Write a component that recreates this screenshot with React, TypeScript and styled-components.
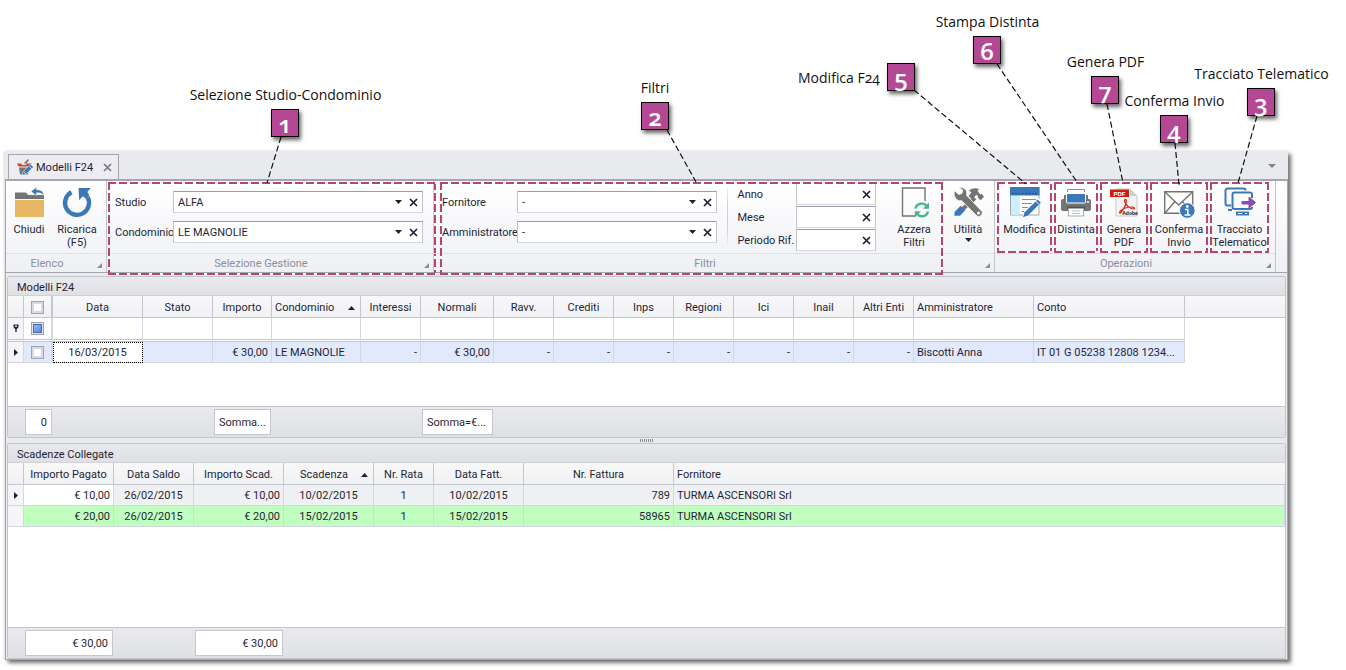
import React from "react";
import styled, { createGlobalStyle, css } from "styled-components";

const ink = "#1f1f35";
const line = "#c4c6ce";
const steel = "#a3a5af";
const rose = "#b5476b";
const blue = "#3c78b8";
const grey = "#747474";
const uiFont = `Roboto, "Liberation Sans", sans-serif`;
const noteFont = `"Open Sans", "Noto Sans", sans-serif`;

const GlobalStyle = createGlobalStyle`
  * { box-sizing: border-box; }
  body { margin: 0; background: #fff; color: ${ink}; font: 11px/13px ${uiFont}; }
  button, input, select { font: inherit; color: inherit; margin: 0; }
`;

/* ---------- page and window ---------- */

const Stage = styled.div`
  position: relative;
  display: flex;
  flex-direction: column;
  min-height: 100vh;
  min-width: 1346px;
  padding: 151px 58px 10px 5px;
`;

const Window = styled.main`
  flex: 1;
  display: flex;
  flex-direction: column;
  background: #e9eaee;
  box-shadow: 3px 3px 4px rgba(0, 0, 0, 0.55), -1px 0 2px rgba(0, 0, 0, 0.12);
`;

const TabStrip = styled.header`
  display: flex;
  align-items: flex-end;
  height: 30px;
  padding: 0 10px 0 3px;
  border-bottom: 2px solid ${steel};
`;

const Tab = styled.div`
  display: flex;
  align-items: center;
  gap: 2px;
  height: 25px;
  padding: 0 6px 0 8px;
  border: 1px solid ${steel};
  border-bottom: 0;
  background: #ededf1;
`;

const TabTitle = styled.h1`
  margin: 0;
  width: 65px;
  font: inherit;
  white-space: nowrap;
`;

const PlainButton = styled.button`
  display: flex;
  align-items: center;
  justify-content: center;
  padding: 0;
  border: 0;
  background: none;
`;

const TabMenu = styled(PlainButton)`
  width: 12px;
  height: 12px;
  margin: 0 0 7px auto;
`;

const Body = styled.div`
  flex: 1;
  display: flex;
  flex-direction: column;
  border: 1px solid ${steel};
  border-top: 0;
`;

/* ---------- ribbon ---------- */

const Ribbon = styled.nav`
  display: flex;
  height: 92px;
  margin-bottom: 3px;
  border-bottom: 1px solid ${steel};
  background: linear-gradient(#ffffff, #f3f4f7 75%, #eff0f4);
`;

const dashes = (inset: string) => css`
  content: "";
  position: absolute;
  inset: ${inset};
  pointer-events: none;
  background:
    repeating-linear-gradient(90deg, ${rose} 0 8px, #fff 8px 11px) 0 0 / 100% 2px no-repeat,
    repeating-linear-gradient(90deg, ${rose} 0 8px, #fff 8px 11px) 0 100% / 100% 2px no-repeat,
    repeating-linear-gradient(180deg, ${rose} 0 8px, #fff 8px 11px) 0 0 / 2px 100% no-repeat,
    repeating-linear-gradient(180deg, ${rose} 0 8px, #fff 8px 11px) 100% 0 / 2px 100% no-repeat;
`;

const Group = styled.section<{ $width: number; $mark?: string }>`
  position: relative;
  display: flex;
  flex-direction: column;
  width: ${(p) => p.$width}px;
  border-right: 1px solid ${line};
  ${(p) => p.$mark && css`&::after { ${dashes(p.$mark)} }`}
`;

const GroupBody = styled.div<{ $pad?: number; $gap?: number }>`
  display: flex;
  align-items: flex-start;
  gap: ${(p) => p.$gap ?? 0}px;
  height: 72px;
  padding-left: ${(p) => p.$pad ?? 0}px;
`;

const GroupFoot = styled.footer`
  display: flex;
  align-items: center;
  height: 19px;
  border-top: 1px solid #dfe0e5;
  color: #8b8d9a;
`;

const GroupName = styled.h2`
  flex: 1;
  margin: 0;
  font: inherit;
  text-align: center;
`;

const Launcher = styled(PlainButton)`
  width: 18px;
  height: 100%;
  padding: 5px 0 0 4px;
`;

const Tool = styled.button<{ $width: number; $marked?: boolean }>`
  position: relative;
  display: flex;
  flex-direction: column;
  align-items: center;
  flex: none;
  width: ${(p) => p.$width}px;
  height: 71px;
  margin-top: 1px;
  padding: 5px 0 0;
  border: 0;
  background: none;
  ${(p) => p.$marked && css`&::after { ${dashes("0")} }`}
`;

const ToolText = styled.span`
  margin: 4px 0 2px;
  text-align: center;
  white-space: pre;
`;

const Separator = styled.div`
  width: 1px;
  height: 62px;
  margin-top: 5px;
  background: linear-gradient(#f2f3f6, #cfd1d8 30%, #cfd1d8 70%, #f2f3f6);
`;

const Fields = styled.div<{ $cols: string; $gap: number; $top: number }>`
  display: grid;
  grid-template-columns: ${(p) => p.$cols};
  grid-auto-rows: 22px;
  align-items: center;
  row-gap: ${(p) => p.$gap}px;
  padding-top: ${(p) => p.$top}px;
`;

const FieldLabel = styled.label`
  white-space: nowrap;
`;

const FieldBox = styled.div`
  display: flex;
  align-items: center;
  height: 22px;
  border: 1px solid #c3c5cd;
  border-top-color: #9b9da8;
  border-bottom-color: #d5d7de;
  background: #fff;
`;

const Combo = styled.div`
  position: relative;
  flex: 1;
  min-width: 0;
  display: flex;
  align-items: center;
`;

const Select = styled.select`
  appearance: none;
  width: 100%;
  height: 20px;
  padding: 0 14px 0 4px;
  border: 0;
  background: transparent;
`;

const ComboArrow = styled.svg`
  position: absolute;
  right: 3px;
  pointer-events: none;
`;

const TextBox = styled.input`
  flex: 1;
  min-width: 0;
  height: 20px;
  padding: 0 4px;
  border: 0;
  background: transparent;
`;

const Clear = styled(PlainButton)`
  width: 17px;
  height: 20px;
`;

/* ---------- grids ---------- */

const Panel = styled.section<{ $grow?: boolean }>`
  display: flex;
  flex-direction: column;
  margin: 0 1px;
  border: 1px solid ${line};
  border-radius: 2px;
  background: #fff;
  ${(p) => (p.$grow ? "flex: 1;" : "min-height: 162px;")}
`;

const Caption = styled.h2`
  height: 19px;
  margin: 0;
  padding: 4px 9px 0;
  border-bottom: 1px solid #d0d2d8;
  background: linear-gradient(#e8e9ed, #dfe0e4);
  font: inherit;
`;

const Table = styled.table`
  width: 100%;
  table-layout: fixed;
  border-collapse: separate;
  border-spacing: 0;
`;

type Align = "left" | "center" | "right";

const Head = styled.th<{ $align?: Align; $thick?: boolean }>`
  height: 22px;
  padding: 2px 3px 0;
  border-right: ${(p) => (p.$thick ? 2 : 1)}px solid ${line};
  border-bottom: 1px solid ${line};
  background: linear-gradient(#f8f8f9, #f0f1f3);
  font-weight: normal;
  text-align: ${(p) => p.$align ?? "center"};
  white-space: nowrap;
  &:last-child { border-right: 0; }
`;

const HeadInner = styled.span`
  display: flex;
  align-items: center;
  justify-content: space-between;
  padding-right: 2px;
`;

const HeadLabel = styled.span<{ $align?: Align }>`
  flex: 1;
  text-align: ${(p) => p.$align ?? "center"};
`;

type Tone = "white" | "blue" | "green" | "grey";
const tones: Record<Tone, string> = {
  white: "#fff",
  blue: "#e1e9fd",
  green: "#c0ffc0",
  grey: "#eff0f2",
};

const Cell = styled.td<{ $align?: Align; $tone?: Tone; $thick?: boolean; $focus?: boolean }>`
  height: 21px;
  padding: 0 3px;
  border-right: ${(p) => (p.$thick ? 2 : 1)}px solid #d3d6e0;
  border-bottom: 1px solid #d3d6e0;
  background: ${(p) => tones[p.$tone ?? "white"]};
  text-align: ${(p) => p.$align ?? "left"};
  white-space: nowrap;
  ${(p) => p.$focus && "outline: 1px dotted #000; outline-offset: -1px;"}
`;

const EndCell = styled.td``;

const FilterCell = styled(Cell)`
  height: 24px;
  border-bottom: 3px double ${line};
`;

const Marker = styled(Cell)`
  padding: 0;
  background: #f4f5f7;
  text-align: center;
`;

const FilterMarker = styled(Marker)`
  height: 24px;
  border-bottom: 3px double ${line};
`;

const CheckBox = styled.input`
  appearance: none;
  display: block;
  width: 13px;
  height: 13px;
  margin: 0 auto;
  border: 1px solid #9fa2af;
  background: #fff;
  box-shadow: inset 0 0 0 2px #d8dae1;
`;

const FilterCheckBox = styled(CheckBox)`
  background: linear-gradient(135deg, #a8c2f4, #4c7be0);
  box-shadow: inset 0 0 0 1px #e4e6ec, inset 0 0 0 2px #4669b4;
`;

const Totals = styled.footer<{ $cols: string }>`
  display: grid;
  grid-template-columns: ${(p) => p.$cols};
  align-items: center;
  height: 31px;
  margin-top: auto;
  border-top: 1px solid ${line};
  background: linear-gradient(#e9eaee, #dfe0e4);
`;

const Total = styled.output<{ $col: number; $left?: boolean }>`
  grid-column: ${(p) => p.$col};
  height: 26px;
  margin: 0 1px;
  padding: 6px 4px;
  border: 1px solid ${line};
  background: #fff;
  text-align: ${(p) => (p.$left ? "left" : "right")};
  white-space: nowrap;
`;

const Splitter = styled.div`
  display: flex;
  justify-content: center;
  align-items: center;
  height: 5px;
`;

/* ---------- notes over the window ---------- */

const Leaders = styled.svg`
  position: absolute;
  left: 0;
  top: 0;
  pointer-events: none;
`;

const Note = styled.span<{ $x: number; $y: number; $w: number }>`
  position: absolute;
  left: ${(p) => p.$x}px;
  top: ${(p) => p.$y}px;
  width: ${(p) => p.$w}px;
  display: flex;
  justify-content: center;
  color: #111;
  font: 14px/20px ${noteFont};
  font-variant-numeric: oldstyle-nums;
  white-space: nowrap;
`;

const Badge = styled.span<{ $x: number; $y: number }>`
  position: absolute;
  left: ${(p) => p.$x}px;
  top: ${(p) => p.$y}px;
  width: 28px;
  height: 28px;
  border: 1px solid #000;
  background: #b44894;
  box-shadow: 2px 3px 4px rgba(0, 0, 0, 0.6);
  color: #fff;
  font: 600 24px/27px ${noteFont};
  font-variant-numeric: oldstyle-nums;
  text-align: center;
`;

/* ---------- drawings ---------- */

const Icon = ({ children }: { children: React.ReactNode }) => (
  <svg width="32" height="32" viewBox="0 0 32 32" aria-hidden="true">{children}</svg>
);

const Down = () => (
  <svg width="7" height="4" viewBox="0 0 7 4" aria-hidden="true"><path d="M0 0h7L3.5 4z" fill={ink} /></svg>
);

const Cross = ({ size = 9, color = ink }: { size?: number; color?: string }) => (
  <svg width={size} height={size} viewBox="0 0 9 9" aria-hidden="true">
    <path d="M1 1l7 7M8 1L1 8" stroke={color} strokeWidth="1.7" />
  </svg>
);

const SortUp = () => (
  <svg width="7" height="4" viewBox="0 0 7 4" aria-hidden="true"><path d="M0 4h7L3.5 0z" fill={ink} /></svg>
);

const RowArrow = () => (
  <svg width="4" height="7" viewBox="0 0 4 7" aria-hidden="true"><path d="M0 0v7l4-3.5z" fill={ink} /></svg>
);

const FilterPin = () => (
  <svg width="6" height="8" viewBox="0 0 6 8" aria-hidden="true">
    <path d="M.5 .500h5v2.500L4 5H2L.5 3z" fill={ink} />
    <path d="M2 1.500h2v1.300H2z" fill="#fff" />
    <path d="M2.300 5h1.400v3H2.300z" fill={ink} />
  </svg>
);

const TabIcon = () => (
  <svg width="17" height="17" viewBox="0 0 17 17" aria-hidden="true">
    <path d="M0 4.500h4l1.500 1.500h3L10 4.500h4.500L13 7.500H1.500z" fill="#d0452c" />
    <path d="M6.500 4.500L11 0l1 1-2.500 3.500z" fill="#777" />
    <path d="M2 8.500h10l-1 7H3z" fill="#777" />
    <path d="M5 16.500l1-4L13.500 5l3 3L9 15.500z" fill="#fff" />
    <path d="M5.500 16l1-3.500L13.500 5.500l2.700 2.600L9 15z" fill={blue} />
    <path d="M7 13l1.600 1.500M12.500 7.500l2 2" stroke="#fff" strokeWidth=".8" />
  </svg>
);

const CloseFolder = () => (
  <Icon>
    <path d="M2 5.500h10.500l3 2.500H31v4H2z" fill={grey} />
    <path d="M2 13h29v17H2z" fill="#e9b764" />
    <path d="M18 4.500l5.500-4.300v2.600c4.500 0 6.800 1.700 7.500 5.700-2-2.300-4-2.800-7.500-2.800v3z" fill={blue} stroke="#fff" strokeWidth=".4" />
  </Icon>
);

const Reload = () => (
  <Icon>
    <path d="M10.500 5.200A12 12 0 1 0 26.500 10" fill="none" stroke={blue} strokeWidth="4.400" />
    <path d="M17.500 1h12.200l-3.300 4 2 3.600-3.500 3-3.100-2.400-3.600 4z" fill={blue} />
  </Icon>
);

const ResetFilters = () => (
  <Icon>
    <path d="M27 14V1H4.500v28H17" fill="none" stroke={grey} strokeWidth="1.400" />
    <path d="M17.500 21.500c1.200-5.500 8.500-6.500 11.300-2.200" fill="none" stroke="#4bb58a" strokeWidth="2.400" />
    <path d="M31 15.500v6.300h-6.200z" fill="#4bb58a" />
    <path d="M30 24.500c-1.200 5.300-8 6.300-11 2.200" fill="none" stroke="#4bb58a" strokeWidth="2.400" />
    <path d="M16.800 30.500v-6.300H23z" fill="#4bb58a" />
  </Icon>
);

const Utilities = () => (
  <Icon>
    <path d="M23 11L8.500 24" stroke={grey} strokeWidth="4" />
    <path d="M2.500 25l6.200-6.200 4.500 4.500-5.200 5.500H2.500z" fill={blue} />
    <path d="M17 3.500c3-2.300 6.500-2.800 10-1.500l-1.500 2 2.800 3.500 1.500-.8 2.200 3-3.300 3.600-3-2.900.3-1.300-1.600-1.300L20 12.500 16.500 9l3-3.500z" fill={grey} />
    <path d="M2.500 3.500l4 4 3.500-1 .8-3.400-3.700-2.300c5-1.300 8.800 2.700 7.400 7.400L30 24.500c1 3-2 6-5 4.500L9.500 13.500C5 15 .8 9.500 2.500 3.500z" fill={grey} stroke="#f8f8fa" strokeWidth=".8" />
    <circle cx="26.500" cy="26" r="1.500" fill="#fff" />
  </Icon>
);

const EditForm = () => (
  <Icon>
    <path d="M1.500 1h28.500v27H1.500z" fill="#fff" stroke="#9aa7b3" />
    <path d="M2 9h9v19H2z" fill="#cdf0f8" />
    <path d="M1 0h29.500v8.500H1z" fill={blue} />
    <path d="M3 6.500h26" stroke="#1f4f85" strokeWidth="1.600" strokeDasharray="1.500 1.800" />
    <path d="M13 12.500h14M13 16.500h12M13 20.500h9M13 24.500h6" stroke="#8c8c8c" strokeWidth="1.200" />
    <path d="M13 30.800l2-6.300L29 10.500l4 4L19 28.500z" fill="#fff" />
    <path d="M14 30.300l1.700-5L28.500 12.500l3.400 3.300L19 28.500z" fill={blue} />
    <path d="M26.500 14l3.400 3.400" stroke="#fff" />
  </Icon>
);

const Printer = () => (
  <Icon>
    <path d="M7.500 5V2.500h17V5" fill="none" stroke="#8a8a8a" />
    <path d="M3 12h26a2 2 0 0 1 2 2v8a2 2 0 0 1-2 2H3a2 2 0 0 1-2-2v-8a2 2 0 0 1 2-2z" fill={grey} />
    <path d="M4 8h3v4H4zM25 8h3v4h-3z" fill={grey} />
    <path d="M6.500 6.500h19V15a1 1 0 0 1-1 1h-17a1 1 0 0 1-1-1z" fill={blue} stroke="#fff" />
    <path d="M7 19.500h18V22H7z" fill="#555" />
    <path d="M8.500 21.500h15V29h-15z" fill="#fff" stroke="#aaa" />
    <path d="M12 24h8M12 26.500h8" stroke="#9cc" />
    <circle cx="28" cy="15" r="1" fill="#fff" />
  </Icon>
);

const PdfFile = () => (
  <Icon>
    <path d="M8 2h14l7 7v20H8z" fill="#f4f4f4" stroke="#c9c9c9" />
    <path d="M22 2v7h7z" fill="#ccc" />
    <path d="M2 2.500h19V10H2z" fill="#d3180c" />
    <text x="11.500" y="8.500" textAnchor="middle" fill="#fff" fontFamily="Liberation Sans" fontWeight="bold" fontSize="6">PDF</text>
    <path d="M17 12.500c-1.500 1.500 1.500 7 6.500 9 3.500 1.500 4-1.500.500-1.500-4 0-9 1.500-11.500 4-2 2-.5 3 1 .8 2.500-3.500 5-8.800 4.800-11.300-.1-1-.9-1.500-1.300-1z" fill="none" stroke="#e0281a" strokeWidth="1.200" />
    <text x="22" y="28" textAnchor="middle" fill="#111" fontFamily="Liberation Sans" fontWeight="bold" fontSize="5">Adobe</text>
  </Icon>
);

const Envelope = () => (
  <Icon>
    <path d="M1.700 4.700h28v21.600h-28z" fill="#fff" stroke={grey} strokeWidth="1.400" />
    <path d="M2 5l13.700 13L29.500 5M2 26l10-11.500M29.500 26l-10-11.500" fill="none" stroke={grey} strokeWidth="1.400" />
    <circle cx="24.300" cy="23.500" r="7.800" fill={blue} stroke="#fff" />
    <circle cx="24.300" cy="19.500" r="1.400" fill="#fff" />
    <path d="M22 22.500h2.800v5M21.500 28h6" fill="none" stroke="#fff" strokeWidth="1.600" />
  </Icon>
);

const Telematic = () => (
  <Icon>
    <path d="M7 18.500H3.500a2 2 0 0 1-2-2v-13a2 2 0 0 1 2-2h16a2 2 0 0 1 2 2" fill="none" stroke={blue} strokeWidth="2" />
    <path d="M4 23h4" stroke={blue} strokeWidth="2" />
    <path d="M28 11V7.500a2 2 0 0 0-2-2H10.500a2 2 0 0 0-2 2V20a2 2 0 0 0 2 2H26a2 2 0 0 0 2-2" fill="none" stroke={blue} strokeWidth="2" />
    <path d="M18 14.500h7V10l6.500 5.500L25 21v-4h-7z" fill="#8b4da8" stroke="#8b4da8" />
    <path d="M12 24.500h13v4H12z" fill={blue} />
    <path d="M14 26.500h4M21 26.500h2" stroke="#fff" />
  </Icon>
);

/* ---------- pieces ---------- */

const SelectField = ({ id, label, value }: { id: string; label: string; value: string }) => (
  <>
    <FieldLabel htmlFor={id}>{label}</FieldLabel>
    <FieldBox>
      <Combo>
        <Select id={id} defaultValue={value}><option>{value}</option></Select>
        <ComboArrow width="7" height="4" viewBox="0 0 7 4"><path d="M0 0h7L3.500 4z" fill={ink} /></ComboArrow>
      </Combo>
      <Clear type="button" aria-label={`Svuota ${label}`}><Cross /></Clear>
    </FieldBox>
  </>
);

const InputField = ({ id, label }: { id: string; label: string }) => (
  <>
    <FieldLabel htmlFor={id}>{label}</FieldLabel>
    <FieldBox>
      <TextBox id={id} type="text" />
      <Clear type="button" aria-label={`Svuota ${label}`}><Cross /></Clear>
    </FieldBox>
  </>
);

const Foot = ({ name }: { name: string }) => (
  <GroupFoot>
    <GroupName>{name}</GroupName>
    <Launcher type="button" aria-label={`Opzioni ${name}`}>
      <svg width="5" height="5" viewBox="0 0 5 5" aria-hidden="true"><path d="M5 0v5H0z" fill="#8b8d9a" /></svg>
    </Launcher>
  </GroupFoot>
);

interface Column { name: string; width?: number; align?: Align; head?: Align; sorted?: boolean }

const modelli: Column[] = [
  { name: "Data", width: 90, align: "center" },
  { name: "Stato", width: 70 },
  { name: "Importo", width: 59, align: "right" },
  { name: "Condominio", width: 89, head: "left", sorted: true },
  { name: "Interessi", width: 60, align: "right" },
  { name: "Normali", width: 73, align: "right" },
  { name: "Ravv.", width: 60, align: "right" },
  { name: "Crediti", width: 60, align: "right" },
  { name: "Inps", width: 60, align: "right" },
  { name: "Regioni", width: 60, align: "right" },
  { name: "Ici", width: 60, align: "right" },
  { name: "Inail", width: 60, align: "right" },
  { name: "Altri Enti", width: 60, align: "right" },
  { name: "Amministratore", width: 120, head: "left" },
  { name: "Conto", width: 151, head: "left" },
];
const modello = ["16/03/2015", "", "€ 30,00", "LE MAGNOLIE", "-", "€ 30,00", "-", "-", "-", "-", "-", "-", "-",
  "Biscotti Anna", "IT 01 G 05238 12808 1234..."];

const scadenze: Column[] = [
  { name: "Importo Pagato", width: 90, align: "right" },
  { name: "Data Saldo", width: 80, align: "center" },
  { name: "Importo Scad.", width: 90, align: "right" },
  { name: "Scadenza", width: 90, align: "center", sorted: true },
  { name: "Nr. Rata", width: 60, align: "center" },
  { name: "Data Fatt.", width: 90, align: "center" },
  { name: "Nr. Fattura", width: 150, align: "right" },
  { name: "Fornitore", head: "left" },
];
const rate = [
  ["€ 10,00", "26/02/2015", "€ 10,00", "10/02/2015", "1", "10/02/2015", "789", "TURMA ASCENSORI Srl"],
  ["€ 20,00", "26/02/2015", "€ 20,00", "15/02/2015", "1", "15/02/2015", "58965", "TURMA ASCENSORI Srl"],
];

const tracks = (lead: number[], cols: Column[]) =>
  [...lead.map((w) => `${w}px`), ...cols.map((c) => (c.width ? `${c.width}px` : "1fr"))].join(" ");

const HeadCell = ({ col }: { col: Column }) => (
  <Head scope="col" $align={col.head}>
    {col.sorted ? (
      <HeadInner><HeadLabel $align={col.head}>{col.name}</HeadLabel><SortUp /></HeadInner>
    ) : col.name}
  </Head>
);

const notes = [
  { n: 1, text: "Selezione Studio-Condominio", x: 187, y: 85, w: 197, bx: 271, by: 109, to: [281, 137, 267, 183] },
  { n: 2, text: "Filtri", x: 640, y: 78, w: 30, bx: 641, by: 102, to: [667, 130, 696, 182] },
  { n: 5, text: "Modifica F24", x: 796, y: 68, w: 86, bx: 887, by: 63, to: [914, 90, 1026, 184] },
  { n: 6, text: "Stampa Distinta", x: 934, y: 12, w: 107, bx: 973, by: 36, to: [997, 64, 1077, 182] },
  { n: 7, text: "Genera PDF", x: 1066, y: 52, w: 79, bx: 1091, by: 76, to: [1107, 104, 1123, 183] },
  { n: 4, text: "Conferma Invio", x: 1123, y: 91, w: 103, bx: 1160, by: 115, to: [1175, 143, 1179, 185] },
  { n: 3, text: "Tracciato Telematico", x: 1193, y: 64, w: 137, bx: 1247, by: 88, to: [1257, 116, 1238, 183] },
];

export default function App() {
  return (
    <Stage>
      <GlobalStyle />
      <Window>
        <TabStrip>
          <Tab>
            <TabIcon />
            <TabTitle>Modelli F24</TabTitle>
            <PlainButton type="button" aria-label="Chiudi scheda"><Cross color="#77798a" /></PlainButton>
          </Tab>
          <TabMenu type="button" aria-label="Elenco schede">
            <svg width="8" height="4" viewBox="0 0 8 4" aria-hidden="true"><path d="M0 0h8L4 4z" fill="#7d7f8e" /></svg>
          </TabMenu>
        </TabStrip>
        <Body>
          <Ribbon>
            <Group $width={101}>
              <GroupBody>
                <Tool type="button" $width={46}><CloseFolder /><ToolText>Chiudi</ToolText></Tool>
                <Tool type="button" $width={50}><Reload /><ToolText>{"Ricarica\n(F5)"}</ToolText></Tool>
              </GroupBody>
              <Foot name="Elenco" />
            </Group>
            <Group $width={327} $mark="1px -3px -3px 1px">
              <GroupBody $pad={8}>
                <Fields $cols="58px 250px" $gap={8} $top={10}>
                  <SelectField id="studio" label="Studio" value="ALFA" />
                  <SelectField id="condominio" label="Condominio" value="LE MAGNOLIE" />
                </Fields>
              </GroupBody>
              <Foot name="Selezione Gestione" />
            </Group>
            <Group $width={561} $mark="1px 51px -3px 6px">
              <GroupBody $pad={8} $gap={10}>
                <Fields $cols="75px 200px" $gap={8} $top={10}>
                  <SelectField id="fornitore" label="Fornitore" value="-" />
                  <SelectField id="amministratore" label="Amministratore" value="-" />
                </Fields>
                <Separator />
                <Fields $cols="58px 80px" $gap={1} $top={2}>
                  <InputField id="anno" label="Anno" />
                  <InputField id="mese" label="Mese" />
                  <InputField id="periodo" label="Periodo Rif." />
                </Fields>
                <Separator />
                <Tool type="button" $width={36}><ResetFilters /><ToolText>{"Azzera\nFiltri"}</ToolText></Tool>
                <Tool type="button" $width={52}><Utilities /><ToolText>Utilità</ToolText><Down /></Tool>
              </GroupBody>
              <Foot name="Filtri" />
            </Group>
            <Group $width={281}>
              <GroupBody $pad={2} $gap={2}>
                <Tool type="button" $width={55} $marked><EditForm /><ToolText>Modifica</ToolText></Tool>
                <Tool type="button" $width={44} $marked><Printer /><ToolText>Distinta</ToolText></Tool>
                <Tool type="button" $width={48} $marked><PdfFile /><ToolText>{"Genera\nPDF"}</ToolText></Tool>
                <Tool type="button" $width={58} $marked><Envelope /><ToolText>{"Conferma\nInvio"}</ToolText></Tool>
                <Tool type="button" $width={59} $marked><Telematic /><ToolText>{"Tracciato\nTelematico"}</ToolText></Tool>
              </GroupBody>
              <Foot name="Operazioni" />
            </Group>
          </Ribbon>

          <Panel>
            <Caption>Modelli F24</Caption>
            <Table>
              <colgroup>
                <col width="16" />
                <col width="29" />
                {modelli.map((c) => <col key={c.name} width={c.width} />)}
                <col />
              </colgroup>
              <thead>
                <tr>
                  <Head aria-label="Riga" />
                  <Head scope="col" $thick><CheckBox type="checkbox" aria-label="Seleziona tutti" /></Head>
                  {modelli.map((c) => <HeadCell key={c.name} col={c} />)}
                  <Head aria-hidden="true" />
                </tr>
              </thead>
              <tbody>
                <tr>
                  <FilterMarker><FilterPin /></FilterMarker>
                  <FilterCell $thick><FilterCheckBox type="checkbox" aria-label="Filtro selezione" /></FilterCell>
                  {modelli.map((c) => <FilterCell key={c.name} />)}
                  <EndCell />
                </tr>
                <tr>
                  <Marker><RowArrow /></Marker>
                  <Cell $tone="blue" $thick><CheckBox type="checkbox" aria-label="Seleziona riga" /></Cell>
                  {modelli.map((c, i) => (
                    <Cell key={c.name} $align={c.align} $tone={i === 0 ? "white" : "blue"} $focus={i === 0}>{modello[i]}</Cell>
                  ))}
                  <EndCell />
                </tr>
              </tbody>
            </Table>
            <Totals $cols={tracks([16, 29], modelli)}>
              <Total $col={2}>0</Total>
              <Total $col={5} $left>Somma...</Total>
              <Total $col={8} $left>Somma=€...</Total>
            </Totals>
          </Panel>

          <Splitter>
            <svg width="14" height="3" viewBox="0 0 14 3" aria-hidden="true">
              <path d="M0 1.500h14" stroke="#8b8d9a" strokeWidth="3" strokeDasharray="1 1" />
            </svg>
          </Splitter>

          <Panel $grow>
            <Caption>Scadenze Collegate</Caption>
            <Table>
              <colgroup>
                <col width="16" />
                {scadenze.map((c) => <col key={c.name} width={c.width} />)}
              </colgroup>
              <thead>
                <tr>
                  <Head aria-label="Riga" />
                  {scadenze.map((c) => <HeadCell key={c.name} col={c} />)}
                </tr>
              </thead>
              <tbody>
                {rate.map((row, r) => (
                  <tr key={r}>
                    <Marker>{r === 0 && <RowArrow />}</Marker>
                    {scadenze.map((c, i) => (
                      <Cell key={c.name} $align={c.align} $tone={r === 1 ? "green" : i === 0 ? "white" : "grey"}>{row[i]}</Cell>
                    ))}
                  </tr>
                ))}
              </tbody>
            </Table>
            <Totals $cols={tracks([16], scadenze)}>
              <Total $col={2}>€ 30,00</Total>
              <Total $col={4}>€ 30,00</Total>
            </Totals>
          </Panel>
        </Body>
      </Window>

      <Leaders width="1346" height="190" viewBox="0 0 1346 190" aria-hidden="true">
        {notes.map(({ n, to }) => (
          <line key={n} x1={to[0]} y1={to[1]} x2={to[2]} y2={to[3]} stroke="#111" strokeWidth="1.200" strokeDasharray="6 3" />
        ))}
      </Leaders>
      {notes.map((k) => (
        <React.Fragment key={k.n}>
          <Note $x={k.x} $y={k.y} $w={k.w}>{k.text}</Note>
          <Badge $x={k.bx} $y={k.by}>{k.n}</Badge>
        </React.Fragment>
      ))}
    </Stage>
  );
}
